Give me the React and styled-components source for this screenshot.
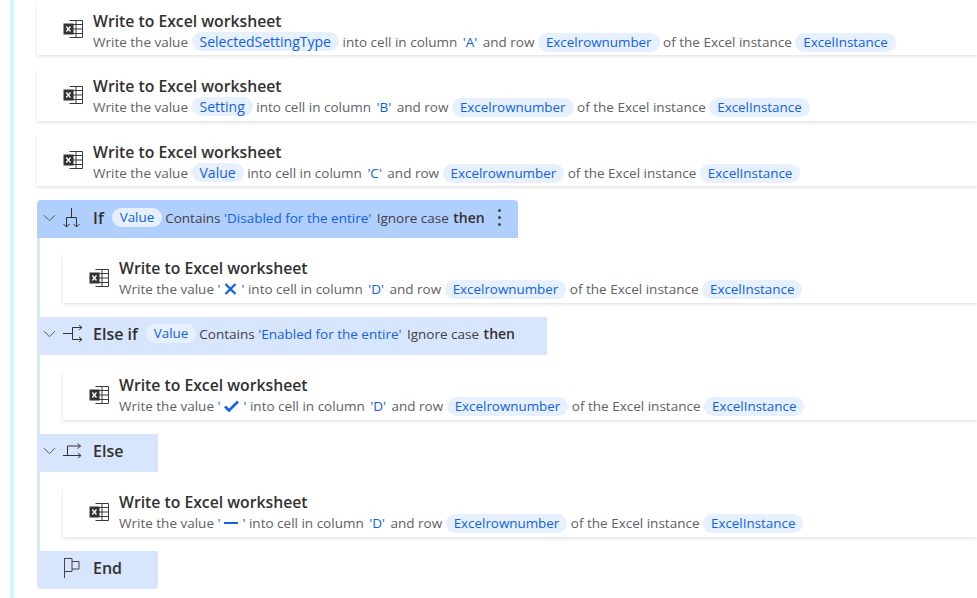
import React from "react";
import styled, { createGlobalStyle } from "styled-components";

const GlobalStyle = createGlobalStyle`
  html, body {
    margin: 0;
    padding: 0;
    background: #fff;
    overflow: hidden;
  }
  body {
    font-family: "Open Sans", "Noto Sans", "Liberation Sans", sans-serif;
  }
`;

function ExcelIcon() {
  return (
    <svg width="20" height="18" viewBox="0 0 20 18">
      <path d="M6.5 0.5H19.5V17.5H6.5" fill="#fff" stroke="#3a3a3a" />
      <path d="M13 0.5V17.5M7 4.5H19.5M7 9H19.5M7 13.5H19.5" fill="none" stroke="#3a3a3a" />
      <rect x="0.5" y="3.5" width="10" height="11" fill="#333" />
      <path d="M3.3 6.5L7.5 11.5M7.5 6.5L3.3 11.5" stroke="#fff" strokeWidth="1.3" fill="none" />
    </svg>
  );
}

function Chevron() {
  return (
    <svg width="13" height="8" viewBox="0 0 13 8">
      <path d="M1 1.2L6.5 6.7L12 1.2" fill="none" stroke="#555" strokeWidth="1" />
    </svg>
  );
}

function IfIcon() {
  return (
    <svg width="17" height="20" viewBox="0 0 17 20">
      <path
        d="M8.5 0V9.5M3.5 19V9.5H13.5V19M0.5 16L3.5 19L6.5 16M10.5 16L13.5 19L16.5 16"
        fill="none"
        stroke="#333"
      />
    </svg>
  );
}

function ElseIfIcon() {
  return (
    <svg width="20" height="17" viewBox="0 0 20 17">
      <path
        d="M0 8.5H9.5M9.5 2.5V14.5M9.5 2.5H19M9.5 14.5H19M16 0L19 2.5L16 5M16 12L19 14.5L16 17"
        fill="none"
        stroke="#333"
      />
    </svg>
  );
}

function ElseIcon() {
  return (
    <svg width="19" height="15" viewBox="0 0 19 15">
      <path
        d="M0 12.5H18M4.5 12.5V3H17.5M14.5 0.5L17.5 3L14.5 5.5M15 10L18 12.5L15 15"
        fill="none"
        stroke="#333"
      />
    </svg>
  );
}

function EndIcon() {
  return (
    <svg width="17" height="20" viewBox="0 0 17 20">
      <path d="M1.5 0V20M1.5 0.5H9V3.5H16V11H9V13.5H1.5M9 3.5V11" fill="none" stroke="#444" />
    </svg>
  );
}

function WriteCard({ nested, value, column, literal }) {
  return (
    <Card $nested={nested}>
      <CardIcon>
        <ExcelIcon />
      </CardIcon>
      <CardBody $nested={nested}>
        <CardTitle>Write to Excel worksheet</CardTitle>
        <CardText>
          Write the value{" "}
          {literal ? (
            <Literal>
              '<Glyph>{literal}</Glyph>'
            </Literal>
          ) : (
            <ChipBox $value>{value}</ChipBox>
          )}{" "}
          into cell in column <ColumnName>'{column}'</ColumnName> and row{" "}
          <ChipBox>Excelrownumber</ChipBox> of the Excel instance <ChipBox>ExcelInstance</ChipBox>
        </CardText>
      </CardBody>
    </Card>
  );
}

function Cross() {
  return (
    <svg width="13" height="12" viewBox="0 0 13 12">
      <path d="M1.5 1L11.5 11M11.5 1L1.5 11" stroke="#0f62e6" strokeWidth="2.2" fill="none" />
    </svg>
  );
}

function Check() {
  return (
    <svg width="15" height="12" viewBox="0 0 15 12">
      <path d="M1 6.5L5 10.5L14 1.5" stroke="#0f62e6" strokeWidth="2.6" fill="none" />
    </svg>
  );
}

function Dash() {
  return (
    <svg width="14" height="12" viewBox="0 0 14 12">
      <path d="M0 6H14" stroke="#0f62e6" strokeWidth="2" fill="none" />
    </svg>
  );
}

function App() {
  return (
    <>
      <GlobalStyle />
      <Page>
        <Stripe />
        <Flow>
          <WriteCard value="SelectedSettingType" column="A" />
          <WriteCard value="Setting" column="B" />
          <WriteCard value="Value" column="C" />

          <Block>
            <Header $width={481} $active>
              <Toggle>
                <Chevron />
              </Toggle>
              <HeadIcon>
                <IfIcon />
              </HeadIcon>
              <Keyword>If</Keyword>
              <ChipBox>Value</ChipBox>
              <Condition>
                Contains <ConditionValue>'Disabled for the entire'</ConditionValue> Ignore case{" "}
                <b>then</b>
              </Condition>
              <MoreDots>
                <i />
                <i />
                <i />
              </MoreDots>
            </Header>
            <Body>
              <WriteCard nested literal={<Cross />} column="D" />
            </Body>
            <Header $width={510}>
              <Toggle>
                <Chevron />
              </Toggle>
              <HeadIcon>
                <ElseIfIcon />
              </HeadIcon>
              <Keyword>Else if</Keyword>
              <ChipBox>Value</ChipBox>
              <Condition>
                Contains <ConditionValue>'Enabled for the entire'</ConditionValue> Ignore case{" "}
                <b>then</b>
              </Condition>
            </Header>
            <Body>
              <WriteCard nested literal={<Check />} column="D" />
            </Body>
            <Header $width={121}>
              <Toggle>
                <Chevron />
              </Toggle>
              <HeadIcon>
                <ElseIcon />
              </HeadIcon>
              <Keyword>Else</Keyword>
            </Header>
            <Body>
              <WriteCard nested literal={<Dash />} column="D" />
            </Body>
            <Header $width={121} $end>
              <Toggle />
              <HeadIcon>
                <EndIcon />
              </HeadIcon>
              <Keyword>End</Keyword>
            </Header>
          </Block>
        </Flow>
      </Page>
    </>
  );
}

export default App;

const Page = styled.div`
  width: 977px;
  height: 598px;
  display: flex;
  overflow: hidden;
  background: #fff;
`;

const Stripe = styled.div`
  width: 4px;
  height: 598px;
  margin-left: 10px;
  background: #cff7fa;
  flex: none;
`;

const Flow = styled.div`
  margin-left: 22px;
  padding-top: 3.5px;
  width: 941px;
  flex: none;
`;

const Card = styled.div`
  display: flex;
  align-items: center;
  height: ${(p) => (p.$nested ? 50.5 : 51.5)}px;
  margin-bottom: ${(p) => (p.$nested ? 0 : 14)}px;
  margin-left: ${(p) => (p.$nested ? 23 : 1)}px;
  background: #fff;
  box-shadow: 0 1.6px 3.6px rgba(0, 0, 0, 0.13), 0 0.3px 0.9px rgba(0, 0, 0, 0.11);
  overflow: hidden;
`;

const CardIcon = styled.div`
  width: 46px;
  flex: none;
  display: flex;
  justify-content: flex-end;
  margin-right: 10px;
`;

const CardBody = styled.div`
  padding-top: ${(p) => (p.$nested ? 2 : 5)}px;
`;

const CardTitle = styled.div`
  font-size: 15.75px;
  line-height: 21px;
  font-weight: 600;
  color: #323130;
  white-space: nowrap;
`;

const CardText = styled.div`
  font-size: 13.5px;
  line-height: 21px;
  color: #616161;
  white-space: nowrap;
`;

const ChipBox = styled.span`
  display: inline-block;
  height: 19px;
  line-height: 19px;
  padding: 0 8px;
  border-radius: 10px;
  background: #e7f0fe;
  color: #0f62e6;
  font-size: ${(p) => (p.$value ? 14 : 13.4)}px;
`;

const Literal = styled.span`
  color: #0f62e6;
`;

const ColumnName = styled(Literal)`
  margin: 0 2px;
`;

const Glyph = styled.span`
  display: inline-flex;
  margin: 0 4px;
  vertical-align: -1px;
`;

const Block = styled.div`
  margin-left: 1px;
`;

const Body = styled.div`
  border-left: 3px solid #d8e6fd;
  padding: 15px 0 14px;
`;

const Header = styled.div`
  display: flex;
  align-items: center;
  box-sizing: border-box;
  width: ${(p) => p.$width}px;
  height: 37.5px;
  padding-bottom: ${(p) => (p.$active ? 2 : 4)}px;
  background: ${(p) => (p.$active ? "#b0cffd" : "#d8e6fd")};
  border-radius: ${(p) => (p.$active ? "4px 4px 0 0" : p.$end ? "0 0 4px 4px" : "0")};
  color: #323130;
  font-size: 13.5px;
  white-space: nowrap;
`;

const Toggle = styled.div`
  width: 20px;
  margin-left: 6px;
  flex: none;
  display: flex;
`;

const HeadIcon = styled.div`
  width: 30px;
  flex: none;
  display: flex;
`;

const Keyword = styled.div`
  font-size: 16px;
  font-weight: 600;
  margin-right: 8px;
  color: #323130;
`;

const Condition = styled.div`
  margin-left: 3px;
  font-size: 13.5px;
  color: #404040;
  b {
    font-weight: 600;
    font-size: 14px;
    margin-left: 1px;
    color: #323130;
  }
`;

const ConditionValue = styled(Literal)`
  margin-right: 2px;
`;

const MoreDots = styled.div`
  margin-left: auto;
  margin-right: 17px;
  display: flex;
  flex-direction: column;
  gap: 4px;
  i {
    width: 3px;
    height: 3px;
    border-radius: 50%;
    background: #444;
  }
`;
